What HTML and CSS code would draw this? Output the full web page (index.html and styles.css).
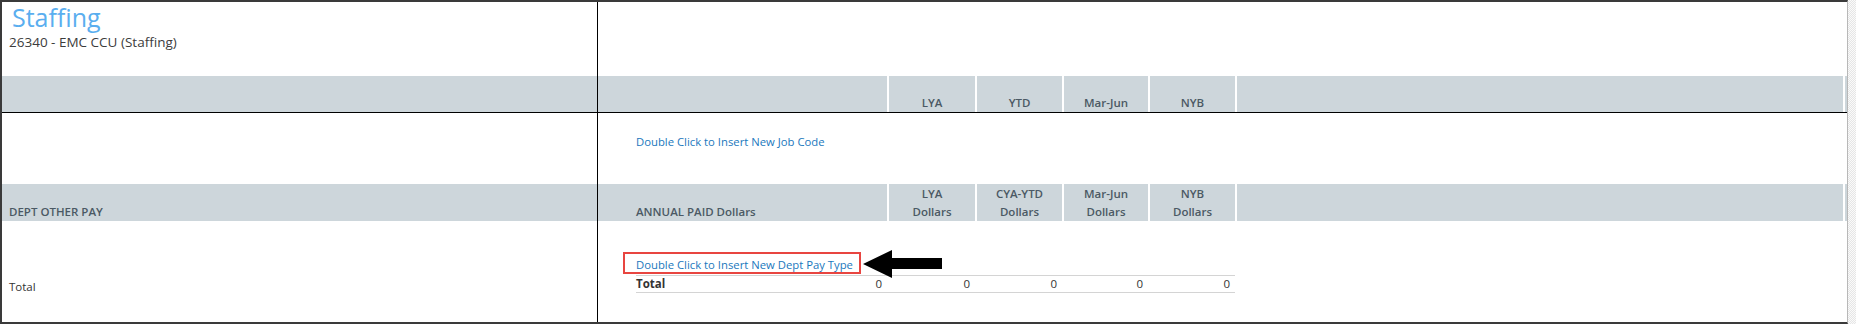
FILE: index.html
```html
<!DOCTYPE html>
<html lang="en">
<head>
    <meta charset="UTF-8">
    <meta name="viewport" content="width=device-width, initial-scale=1.0">
    <title>Staffing - 26340 EMC CCU</title>
    <link rel="stylesheet" href="styles.css">
</head>
<body>
    <div class="frame">
        <!-- Left side: unit title and row labels -->
        <div class="panel panel-left">
            <div class="title-block">
                <h1>Staffing</h1>
                <p class="unit-name">26340 - EMC CCU (Staffing)</p>
            </div>
            <div class="band band-top"></div>
            <div class="job-rows"></div>
            <div class="band band-sub">
                <span class="band-label">DEPT OTHER PAY</span>
            </div>
            <div class="pay-rows">
                <span class="row-label">Total</span>
            </div>
        </div>

        <!-- Right side: job codes and other pay grid -->
        <div class="panel panel-right">
            <div class="title-block"></div>
            <div class="band band-top cols">
                <div class="cell"></div>
                <div class="cell">LYA</div>
                <div class="cell">YTD</div>
                <div class="cell">Mar-Jun</div>
                <div class="cell">NYB</div>
                <div class="cell"></div>
                <div class="cell"></div>
            </div>
            <div class="job-rows">
                <a class="insert-link" href="#">Double Click to Insert New Job Code</a>
            </div>
            <div class="band band-sub cols">
                <div class="cell cell-first">ANNUAL PAID Dollars</div>
                <div class="cell">LYA<br>Dollars</div>
                <div class="cell">CYA-YTD<br>Dollars</div>
                <div class="cell">Mar-Jun<br>Dollars</div>
                <div class="cell">NYB<br>Dollars</div>
                <div class="cell"></div>
                <div class="cell"></div>
            </div>
            <div class="pay-rows">
                <div class="insert-line">
                    <a class="insert-link" href="#">Double Click to Insert New Dept Pay Type</a>
                    <span class="callout-box"></span>
                    <svg class="callout-arrow" width="80" height="28" viewBox="0 0 80 28">
                        <polygon points="0,14 29,0 29,8 79,8 79,19 29,19 29,28" fill="#000"/>
                    </svg>
                </div>
                <div class="total-row">
                    <span class="total-label">Total</span>
                    <span class="num">0</span>
                    <span class="num">0</span>
                    <span class="num">0</span>
                    <span class="num">0</span>
                    <span class="num">0</span>
                </div>
            </div>
        </div>
    </div>
</body>
</html>
```

FILE: styles.css
```css
body {
    margin: 0;
    padding: 0;
    font-family: "Open Sans", "Noto Sans", sans-serif;
    color: #333;
    background-color: #f4f4f4;
    background-image: repeating-conic-gradient(#e6e6e6 0 25%, #fafafa 0 50%);
    background-size: 2px 2px;
}
.frame {
    display: flex;
    width: 1848px;
    height: 324px;
    box-sizing: border-box;
    border: 2px solid #3a3a3a;
    border-right: 1px solid #b8b8b8;
    background-color: #fff;
}
.panel {
    display: flex;
    flex-direction: column;
}
.panel-left {
    width: 596px;
    border-right: 1px solid #000;
}
.panel-right {
    width: 1249px;
}
.title-block {
    height: 74px;
}
h1 {
    margin: 0 0 0 10px;
    font-size: 25px;
    font-weight: 400;
    line-height: 31px;
    color: #5aaeef;
}
.unit-name {
    margin: 1px 0 0 7px;
    font-size: 13.5px;
    line-height: 17px;
    color: #3c3c3c;
}

/* grey header bands */
.band {
    background-color: #cdd6db;
    font-size: 11.5px;
    font-weight: 600;
    line-height: 18px;
    color: #4b5964;
}
.band-top {
    height: 36px;
    border-bottom: 1px solid #000;
}
.band-sub {
    height: 37px;
}
.panel-left .band-sub {
    display: flex;
    align-items: flex-end;
    padding-left: 7px;
}
.cols {
    display: grid;
    grid-template-columns: 289px 86px 85px 84px 85px 606px 2px;
    column-gap: 2px;
    background-color: #fff;
}
.cols .cell {
    background-color: #cdd6db;
    display: flex;
    align-items: flex-end;
    justify-content: center;
    text-align: center;
}
.cols .cell-first {
    justify-content: flex-start;
    text-align: left;
    padding-left: 38px;
}

.job-rows {
    height: 71px;
}
.panel-right .job-rows {
    display: flex;
    align-items: flex-start;
    padding-left: 38px;
    box-sizing: border-box;
    padding-top: 21px;
}
.insert-link {
    font-size: 11.3px;
    line-height: 16px;
    color: #1b78bd;
    text-decoration: none;
}

.pay-rows {
    flex: 1;
    position: relative;
}
.row-label {
    display: block;
    margin: 58px 0 0 7px;
    font-size: 11.5px;
    line-height: 16px;
    color: #333;
}
.insert-line {
    position: relative;
    height: 54px;
    display: flex;
    align-items: flex-end;
    padding-left: 38px;
    box-sizing: border-box;
    padding-bottom: 2px;
}
/* red annotation frame and arrow over the insert link */
.callout-box {
    position: absolute;
    left: 25px;
    top: 31px;
    width: 238px;
    height: 22px;
    box-sizing: border-box;
    border: 2px solid #e84540;
}
.callout-arrow {
    position: absolute;
    left: 265px;
    top: 29px;
}

.total-row {
    display: grid;
    grid-template-columns: 251px 88px 87px 86px 87px;
    width: 599px;
    margin-left: 38px;
    border-top: 1px solid #d4d4d4;
    border-bottom: 1px solid #d4d4d4;
    font-size: 11.5px;
    line-height: 16px;
    color: #333;
}
.total-label {
    grid-column: 1;
    grid-row: 1;
    font-weight: 700;
}
.num {
    text-align: right;
    padding-right: 5px;
}
.total-row .num:nth-of-type(2) {
    grid-column: 1;
    grid-row: 1;
}
```
